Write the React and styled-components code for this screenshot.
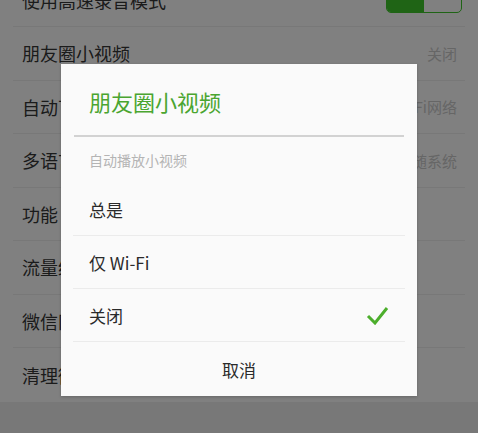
import React from 'react';
import styled, { createGlobalStyle } from 'styled-components';

const GlobalStyle = createGlobalStyle`
  html, body {
    margin: 0;
    padding: 0;
    background: #ececec;
  }
  body {
    font-family: "Noto Sans CJK SC", "Noto Sans", sans-serif;
  }
`;

const Page = styled.div`
  position: relative;
  width: 478px;
  height: 433px;
  overflow: hidden;
  background: #ececec;
`;

const List = styled.div`
  margin-top: -26.5px;
  background: #fcfcfc;
`;

const Row = styled.div`
  height: 53.5px;
  margin: 0 13px;
  padding: 0 9px;
  box-sizing: border-box;
  display: flex;
  align-items: center;
  justify-content: space-between;
  border-bottom: ${(p) => (p.last ? 'none' : '1px solid #ececec')};
`;

const Label = styled.span`
  font-size: 18px;
  color: #363636;
`;

const Value = styled.span`
  font-size: 15px;
  color: #c8c8c8;
  margin-right: -1px;
`;

const Switch = styled.div`
  width: 76px;
  height: 36px;
  margin-top: -10px;
  margin-right: -6px;
  border: 1.5px solid #3ec42a;
  border-radius: 5px;
  box-sizing: border-box;
  display: flex;
  overflow: hidden;
  background: #fcfcfc;
`;

const SwitchFill = styled.div`
  width: 50%;
  background: #3ec42a;
`;

const Overlay = styled.div`
  position: absolute;
  inset: 0;
  background: rgba(0, 0, 0, 0.49);
`;

const Dialog = styled.div`
  position: absolute;
  top: 64px;
  left: 61px;
  width: 356px;
  height: 332px;
  background: #fafafa;
  display: flex;
  flex-direction: column;
  box-shadow: 0 1px 3px rgba(0, 0, 0, 0.2);
`;

const Title = styled.div`
  height: 71px;
  padding: 0 28px;
  display: flex;
  align-items: center;
  font-size: 22px;
  color: #4aa530;
  padding-top: 2px;
  box-sizing: border-box;
`;

const TitleRule = styled.div`
  height: 2px;
  margin: 0 13px;
  background: #d2d2d2;
`;

const Subtitle = styled.div`
  height: 46px;
  padding: 0 28px;
  display: flex;
  align-items: center;
  font-size: 14px;
  color: #b4b4b4;
`;

const Option = styled.div`
  height: 53px;
  margin: 0 12px;
  padding: 0 16px;
  box-sizing: border-box;
  display: flex;
  align-items: center;
  justify-content: space-between;
  font-size: 17px;
  color: #2a2a2a;
  border-bottom: 1px solid #ebebeb;
`;

const Check = styled.svg`
  width: 23px;
  height: 19px;
  margin-right: 0px;
`;

const Cancel = styled.div`
  flex: 1;
  display: flex;
  align-items: center;
  justify-content: center;
  font-size: 17px;
  color: #2a2a2a;
`;

const rows = [
  { label: '使用高速录音模式', toggle: true },
  { label: '朋友圈小视频', value: '关闭' },
  { label: '自动下载安装包', value: '仅Wi-Fi网络' },
  { label: '多语言', value: '跟随系统' },
  { label: '功能' },
  { label: '流量统计' },
  { label: '微信网页版' },
  { label: '清理微信存储空间', last: true },
];

const options = ['总是', '仅 Wi-Fi', '关闭'];

const App = () => {
  return (
    <>
      <GlobalStyle />
      <Page>
        <List>
          {rows.map((row) => (
            <Row key={row.label} last={row.last}>
              <Label>{row.label}</Label>
              {row.value && <Value>{row.value}</Value>}
              {row.toggle && (
                <Switch>
                  <SwitchFill />
                </Switch>
              )}
            </Row>
          ))}
        </List>
        <Overlay />
        <Dialog>
          <Title>朋友圈小视频</Title>
          <TitleRule />
          <Subtitle>自动播放小视频</Subtitle>
          {options.map((opt) => (
            <Option key={opt}>
              <span>{opt}</span>
              {opt === '关闭' && (
                <Check viewBox="0 0 23 19">
                  <path d="M2 10 L9 17 L21 2" fill="none" stroke="#4cae2c" strokeWidth="3" />
                </Check>
              )}
            </Option>
          ))}
          <Cancel>取消</Cancel>
        </Dialog>
      </Page>
    </>
  );
};

export default App;
